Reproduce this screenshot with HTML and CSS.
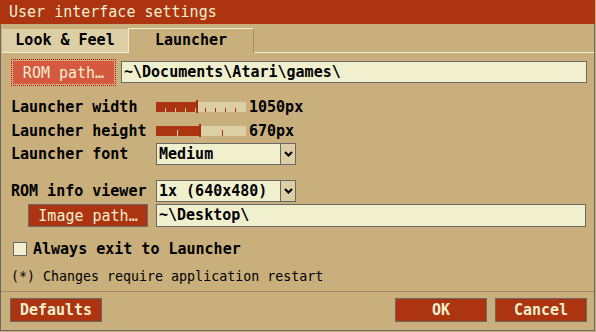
FILE: index.html
```html
<!DOCTYPE html>
<html lang="en">
<head>
    <meta charset="UTF-8">
    <title>User interface settings</title>
    <link rel="stylesheet" href="styles.css">
</head>
<body>
    <div class="dialog">
        <div class="titlebar">User interface settings</div>

        <!-- Tabs -->
        <div class="tabs">
            <div class="tab">Look &amp; Feel</div>
            <div class="tab active">Launcher</div>
            <div class="tab-rest"></div>
        </div>

        <div class="content">
            <div class="row row-rom">
                <button class="btn btn-light btn-focus btn-rom">ROM path…</button>
                <div class="field field-rom">~\Documents\Atari\games\</div>
            </div>

            <div class="row row-slider row-first">
                <span class="label">Launcher width</span>
                <svg class="slider" width="90" height="14" viewBox="0 0 90 14">
                    <rect x="0" y="2" width="90" height="10" fill="#dccfa5"/>
                    <rect x="0" y="2" width="40" height="10" fill="#ac3410"/>
                    <g fill="#dccfa5">
                        <rect x="9" y="8" width="1" height="4"/>
                        <rect x="19" y="8" width="1" height="4"/>
                        <rect x="29" y="8" width="1" height="4"/>
                        <rect x="39" y="8" width="1" height="4"/>
                    </g>
                    <g fill="#ac3410">
                        <rect x="49" y="8" width="1" height="4"/>
                        <rect x="59" y="8" width="1" height="4"/>
                        <rect x="69" y="8" width="1" height="4"/>
                        <rect x="79" y="8" width="1" height="4"/>
                    </g>
                    <rect x="40" y="0" width="2" height="13" fill="#a42e0e"/>
                </svg>
                <span class="value">1050px</span>
            </div>

            <div class="row row-slider">
                <span class="label">Launcher height</span>
                <svg class="slider" width="90" height="14" viewBox="0 0 90 14">
                    <rect x="0" y="2" width="90" height="10" fill="#dccfa5"/>
                    <rect x="0" y="2" width="43" height="10" fill="#ac3410"/>
                    <rect x="21" y="6" width="1" height="6" fill="#dccfa5"/>
                    <rect x="66" y="6" width="1" height="6" fill="#ac3410"/>
                    <rect x="43" y="0" width="2" height="13" fill="#a42e0e"/>
                </svg>
                <span class="value">670px</span>
            </div>

            <div class="row row-select">
                <span class="label">Launcher font</span>
                <div class="select">
                    <span class="select-text">Medium</span>
                    <span class="select-arrow">
                        <svg width="9" height="6" viewBox="0 0 9 6"><polyline points="1,1 4.5,4.5 8,1" fill="none" stroke="#000" stroke-width="2"/></svg>
                    </span>
                </div>
            </div>

            <div class="row row-select row-viewer">
                <span class="label">ROM info viewer</span>
                <div class="select">
                    <span class="select-text">1x (640x480)</span>
                    <span class="select-arrow">
                        <svg width="9" height="6" viewBox="0 0 9 6"><polyline points="1,1 4.5,4.5 8,1" fill="none" stroke="#000" stroke-width="2"/></svg>
                    </span>
                </div>
            </div>

            <div class="row row-image">
                <button class="btn btn-path btn-image">Image path…</button>
                <div class="field field-image">~\Desktop\</div>
            </div>

            <div class="row row-check">
                <span class="checkbox"></span>
                <span class="check-label">Always exit to Launcher</span>
            </div>

            <div class="note">(*) Changes require application restart</div>
        </div>

        <div class="separator"></div>

        <div class="footer">
            <button class="btn btn-bottom">Defaults</button>
            <div class="spacer"></div>
            <button class="btn btn-bottom">OK</button>
            <button class="btn btn-bottom">Cancel</button>
        </div>
    </div>
</body>
</html>
```

FILE: styles.css
```css
body {
    margin: 0;
    background: #c9af7c;
    font-family: "DejaVu Sans Mono", monospace;
    font-size: 15px;
    color: #000;
}
.dialog {
    width: 595px;
    height: 331px;
    box-sizing: border-box;
    border: 1px solid #686868;
    border-top: none;
    display: flex;
    flex-direction: column;
}
.titlebar {
    height: 24px;
    line-height: 24px;
    margin: 0 -1px;
    padding-left: 9px;
    background: #ac3410;
    color: #f0f0cf;
}

/* tabs */
.tabs {
    display: flex;
    align-items: flex-end;
    height: 29px;
    padding-left: 1px;
}
.tab {
    width: 126px;
    height: 23px;
    line-height: 23px;
    text-align: center;
    font-weight: bold;
    background: #dccfa5;
    border-bottom: 1px solid #f0f0cf;
}
.tab.active {
    width: 124px;
    height: 24px;
    line-height: 23px;
    background: #c9af7c;
    border-top: 1px solid #f0f0cf;
    border-left: 1px solid #f0f0cf;
    border-right: 1px solid #a38c61;
    border-bottom: none;
}
.tab-rest {
    flex: 1;
    border-bottom: 1px solid #f0f0cf;
}

.content {
    padding-left: 10px;
    display: flex;
    flex-direction: column;
}
.row {
    display: flex;
    align-items: center;
}
.label {
    width: 145px;
    flex-shrink: 0;
    font-weight: bold;
}

/* buttons */
.btn {
    font-family: "DejaVu Sans Mono", monospace;
    font-size: 15px;
    font-weight: bold;
    padding: 0;
    margin: 0;
    box-sizing: border-box;
    background: #ac3410;
    color: #f0f0cf;
    border: 1px solid #686868;
}
.btn-light {
    background: #d55941;
    border-color: #d55941;
    font-weight: normal;
}
.btn-path {
    font-weight: normal;
}
.btn-focus {
    outline: 1px dotted #c80000;
    outline-offset: 1px;
}
.btn-rom {
    width: 101px;
    height: 23px;
    margin-left: 2px;
}
.btn-image {
    width: 120px;
    height: 23px;
    margin-left: 17px;
}
.btn-bottom {
    width: 92px;
    height: 24px;
}

/* fields */
.field {
    box-sizing: border-box;
    height: 22px;
    line-height: 20px;
    padding-left: 2px;
    background: #f0f0cf;
    border: 1px solid #686868;
    font-weight: bold;
    white-space: nowrap;
}
.field-rom {
    width: 466px;
    margin-left: 7px;
}
.field-image {
    width: 430px;
    margin-left: 8px;
    height: 23px;
    line-height: 21px;
}

.row-rom {
    margin-top: 8px;
    align-items: flex-start;
}
.row-slider {
    height: 24px;
}
.row-first {
    margin-top: 11px;
}
.slider {
    display: block;
}
.value {
    margin-left: 3px;
    font-weight: bold;
}

/* dropdowns */
.row-select {
    height: 22px;
}
.row-viewer {
    margin-top: 15px;
}
.select {
    box-sizing: border-box;
    width: 140px;
    height: 22px;
    display: flex;
    background: #f0f0cf;
    border: 1px solid #686868;
}
.select-text {
    flex: 1;
    line-height: 20px;
    padding-left: 2px;
    font-weight: bold;
}
.select-arrow {
    width: 14px;
    display: flex;
    align-items: center;
    justify-content: center;
    background: #dccfa5;
    border-left: 1px solid #686868;
}

.row-image {
    margin-top: 2px;
}

/* checkbox */
.row-check {
    margin-top: 15px;
    height: 14px;
}
.checkbox {
    box-sizing: border-box;
    width: 14px;
    height: 14px;
    margin-left: 2px;
    background: #f0f0cf;
    border: 1px solid #686868;
}
.check-label {
    margin-left: 6px;
    font-weight: bold;
}

.note {
    margin-top: 13px;
    font-size: 13.3px;
    line-height: 16px;
}

.separator {
    margin-top: 6px;
    height: 1px;
    background: #a38c61;
}
.footer {
    display: flex;
    gap: 8px;
    margin-top: 6px;
    padding: 0 7px 0 9px;
}
.spacer {
    flex: 1;
}
```
